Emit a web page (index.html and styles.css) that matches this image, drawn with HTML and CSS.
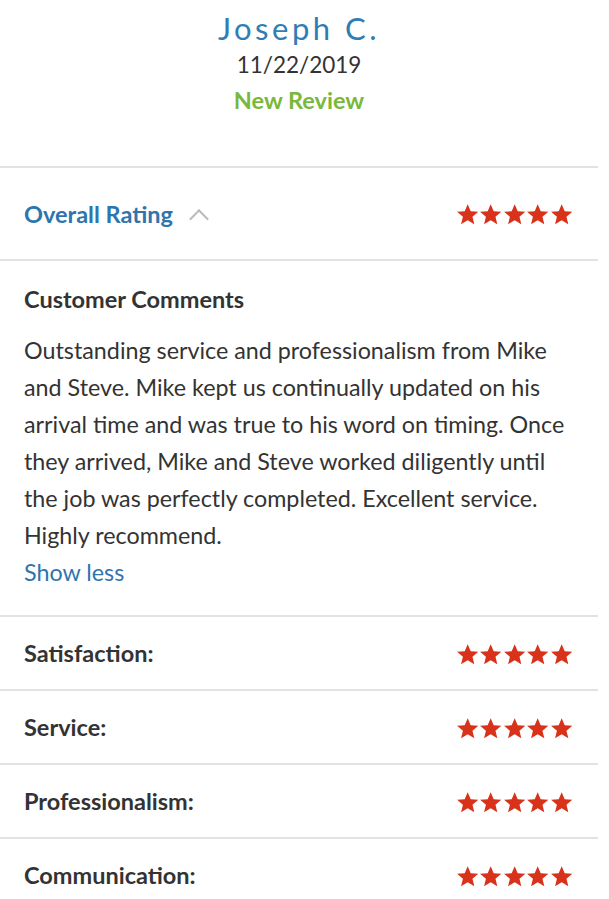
FILE: index.html
```html
<!DOCTYPE html>
<html lang="en">
<head>
    <meta charset="UTF-8">
    <meta name="viewport" content="width=device-width, initial-scale=1.0">
    <title>Review - Joseph C.</title>
    <link rel="stylesheet" href="styles.css">
</head>
<body>

<svg width="0" height="0" class="defs">
    <symbol id="star" viewBox="0 0 24 24">
        <path d="M12 1.2l3.1 7.3 7.8.6-6 5.1 1.9 7.7L12 17.8l-6.8 4.1 1.9-7.7-6-5.1 7.8-.6z"/>
    </symbol>
</svg>

<div class="review">
    <div class="header">
        <div class="name">Joseph C.</div>
        <div class="date">11/22/2019</div>
        <div class="status">New Review</div>
    </div>

    <div class="row overall">
        <div class="overall-label">Overall Rating <span class="chevron"></span></div>
        <div class="stars">
            <svg><use href="#star"/></svg><svg><use href="#star"/></svg><svg><use href="#star"/></svg><svg><use href="#star"/></svg><svg><use href="#star"/></svg>
        </div>
    </div>

    <div class="comments">
        <h2>Customer Comments</h2>
        <p>Outstanding service and professionalism from Mike and Steve. Mike kept us continually updated on his arrival time and was true to his word on timing. Once they arrived, Mike and Steve worked diligently until the job was perfectly completed. Excellent service. Highly recommend.</p>
        <a href="#" class="toggle">Show less</a>
    </div>

    <div class="row">
        <div class="label">Satisfaction:</div>
        <div class="stars">
            <svg><use href="#star"/></svg><svg><use href="#star"/></svg><svg><use href="#star"/></svg><svg><use href="#star"/></svg><svg><use href="#star"/></svg>
        </div>
    </div>
    <div class="row">
        <div class="label">Service:</div>
        <div class="stars">
            <svg><use href="#star"/></svg><svg><use href="#star"/></svg><svg><use href="#star"/></svg><svg><use href="#star"/></svg><svg><use href="#star"/></svg>
        </div>
    </div>
    <div class="row">
        <div class="label">Professionalism:</div>
        <div class="stars">
            <svg><use href="#star"/></svg><svg><use href="#star"/></svg><svg><use href="#star"/></svg><svg><use href="#star"/></svg><svg><use href="#star"/></svg>
        </div>
    </div>
    <div class="row">
        <div class="label">Communication:</div>
        <div class="stars">
            <svg><use href="#star"/></svg><svg><use href="#star"/></svg><svg><use href="#star"/></svg><svg><use href="#star"/></svg><svg><use href="#star"/></svg>
        </div>
    </div>
</div>

</body>
</html>
```

FILE: styles.css
```css
body {
    font-family: Lato, "Open Sans", sans-serif;
    background-color: #fff;
    color: #333;
    margin: 0;
}
.defs {
    position: absolute;
}
.review {
    width: 598px;
}
.header {
    height: 166px;
    text-align: center;
}
.name {
    padding-top: 9px;
    font-size: 31px;
    letter-spacing: 3.5px;
    color: #2f7db5;
    line-height: 38px;
}
.date {
    font-size: 22.5px;
    line-height: 32px;
    margin-top: 2px;
    color: #333;
}
.status {
    font-size: 23.5px;
    font-weight: bold;
    line-height: 34px;
    margin-top: 2px;
    color: #7ab83c;
}
.row {
    display: flex;
    align-items: center;
    justify-content: space-between;
    height: 72px;
    padding: 0 25px 0 24px;
    border-top: 2px solid #e2e2e2;
}
.row.overall {
    height: 91px;
}
.overall-label {
    font-size: 23.5px;
    font-weight: bold;
    color: #2f75ad;
    display: flex;
    align-items: center;
}
.chevron {
    display: inline-block;
    width: 12px;
    height: 12px;
    border-left: 2px solid #bbb;
    border-top: 2px solid #bbb;
    transform: rotate(45deg);
    margin: 10px 0 0 19px;
}
.label {
    font-size: 23.5px;
    font-weight: bold;
    color: #333;
}
.stars {
    display: flex;
    fill: #d8321b;
    padding-top: 3px;
}
.stars svg {
    width: 23.4px;
    height: 23.4px;
}
.comments {
    border-top: 2px solid #e2e2e2;
    padding: 21px 24px 25px;
}
.comments h2 {
    margin: 0;
    font-size: 23.5px;
    font-weight: bold;
    line-height: 34px;
}
.comments p {
    margin: 16px 0 0;
    font-size: 23.3px;
    line-height: 37px;
    color: #333;
}
.toggle {
    display: block;
    font-size: 23.3px;
    line-height: 36px;
    color: #2f75ad;
    text-decoration: none;
}
```
